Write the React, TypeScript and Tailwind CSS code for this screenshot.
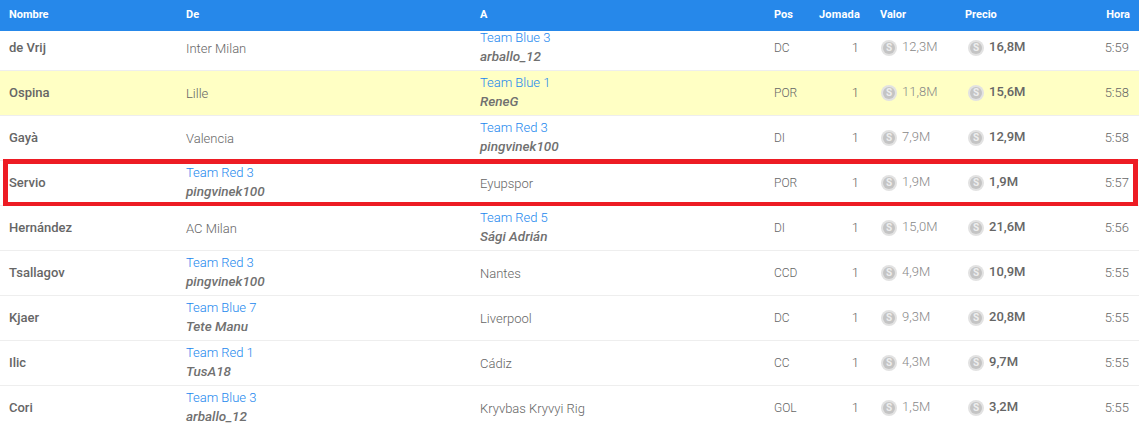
const columns = "grid grid-cols-[177px_294px_294px_45px_60px_87px_85px_97px]";

type Row = {
  name: string;
  from: string | [string, string];
  to: string | [string, string];
  pos: string;
  value: string;
  price: string;
  time: string;
  highlight?: boolean;
  marked?: boolean;
};

const rows: Row[] = [
  { name: "de Vrij", from: "Inter Milan", to: ["Team Blue 3", "arballo_12"], pos: "DC", value: "12,3M", price: "16,8M", time: "5:59" },
  { name: "Ospina", from: "Lille", to: ["Team Blue 1", "ReneG"], pos: "POR", value: "11,8M", price: "15,6M", time: "5:58", highlight: true },
  { name: "Gayà", from: "Valencia", to: ["Team Red 3", "pingvinek100"], pos: "DI", value: "7,9M", price: "12,9M", time: "5:58" },
  { name: "Servio", from: ["Team Red 3", "pingvinek100"], to: "Eyupspor", pos: "POR", value: "1,9M", price: "1,9M", time: "5:57", marked: true },
  { name: "Hernández", from: "AC Milan", to: ["Team Red 5", "Sági Adrián"], pos: "DI", value: "15,0M", price: "21,6M", time: "5:56" },
  { name: "Tsallagov", from: ["Team Red 3", "pingvinek100"], to: "Nantes", pos: "CCD", value: "4,9M", price: "10,9M", time: "5:55" },
  { name: "Kjaer", from: ["Team Blue 7", "Tete Manu"], to: "Liverpool", pos: "DC", value: "9,3M", price: "20,8M", time: "5:55" },
  { name: "Ilic", from: ["Team Red 1", "TusA18"], to: "Cádiz", pos: "CC", value: "4,3M", price: "9,7M", time: "5:55" },
  { name: "Cori", from: ["Team Blue 3", "arballo_12"], to: "Kryvbas Kryvyi Rig", pos: "GOL", value: "1,5M", price: "3,2M", time: "5:55" },
];

function Coin() {
  return (
    <span className="flex h-4 w-4 shrink-0 items-center justify-center rounded-full bg-[#e2e2e2]">
      <span className="flex h-3 w-3 items-center justify-center rounded-full bg-[#c4c4c4] text-[10px] leading-none font-bold text-[#eeeeee]">
        S
      </span>
    </span>
  );
}

function Club({ club }: { club: string | [string, string] }) {
  if (typeof club === "string") {
    return <div className="px-[9px] pt-[2px] text-[13px] font-light text-[#666]">{club}</div>;
  }
  return (
    <div className="-mt-[2px] px-[9px]">
      <div className="text-[13px] leading-[19px] font-light tracking-[-0.03px] text-[#1a87ee]">{club[0]}</div>
      <div className="text-[13.5px] leading-[19px] font-medium text-[#707070] italic">{club[1]}</div>
    </div>
  );
}

export default function App() {
  return (
    <div className="h-[430px] w-[1139px] overflow-hidden bg-white font-['Roboto',sans-serif]">
      {/* Header */}
      <div className={`${columns} relative z-10 h-[31px] items-center bg-[#2688ea] text-[11px] font-bold text-white`}>
        <div className="px-[9px]">Nombre</div>
        <div className="px-[9px]">De</div>
        <div className="px-[9px]">A</div>
        <div className="px-[9px]">Pos</div>
        <div className="pr-[10px] pl-[4px] text-right tracking-[0.2px] whitespace-nowrap">Jomada</div>
        <div className="px-[10px]">Valor</div>
        <div className="px-[8px]">Precio</div>
        <div className="px-[9px] text-right">Hora</div>
      </div>

      {/* Rows, scrolled slightly under the header */}
      <div className="relative -mt-[5px]">
        {rows.map((row) => (
          <div
            key={row.name}
            className={`${columns} relative h-[45px] items-center border-b border-[#eeeeee] ${row.highlight ? "bg-[#ffffc4]" : "bg-white"}`}
          >
            <div className="px-[9px] text-[13px] font-medium text-[#666]">{row.name}</div>
            <Club club={row.from} />
            <Club club={row.to} />
            <div className="px-[9px] text-[12px] font-light text-[#666]">{row.pos}</div>
            <div className="px-[11px] text-right text-[13px] font-light text-[#666]">1</div>
            <div className="flex items-center gap-[5px] px-[11px] text-[13px] font-light text-[#888]">
              <Coin />
              <span className="-mt-[2px]">{row.value}</span>
            </div>
            <div className="flex items-center gap-[5px] px-[11px] text-[13px] font-medium text-[#666]">
              <Coin />
              <span className="-mt-[2px]">{row.price}</span>
            </div>
            <div className="px-[10px] text-right text-[13px] font-light text-[#666]">{row.time}</div>
            {row.marked && (
              <div className="absolute -top-[2px] right-px -bottom-[2px] left-[3px] border-[5px] border-[#ed1c24]" />
            )}
          </div>
        ))}
      </div>
    </div>
  );
}
